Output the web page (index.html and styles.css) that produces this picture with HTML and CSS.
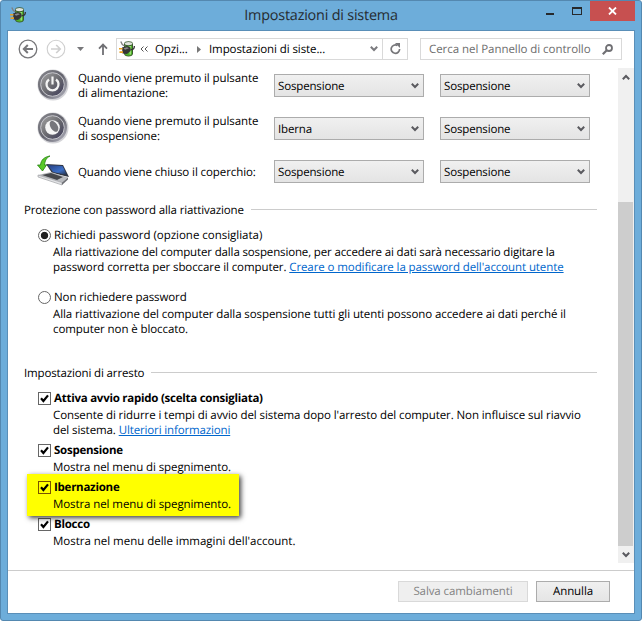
FILE: index.html
```html
<!DOCTYPE html>
<html lang="it">
<head>
<meta charset="utf-8">
<title>Impostazioni di sistema</title>
<link rel="stylesheet" href="styles.css">
</head>
<body>
<svg class="defs" width="0" height="0">
  <defs>
    <linearGradient id="ring" x1="0" y1="0" x2="1" y2="1"><stop offset="0" stop-color="#8b8b90"/><stop offset=".5" stop-color="#62626c"/><stop offset="1" stop-color="#b8b8c4"/></linearGradient>
    <linearGradient id="disc" x1="0" y1="0" x2="1" y2="1"><stop offset="0" stop-color="#a5a5a5"/><stop offset=".5" stop-color="#6b6b70"/><stop offset="1" stop-color="#3a3858"/></linearGradient>
    <linearGradient id="screen" x1="0" y1="0" x2="1" y2="1"><stop offset="0" stop-color="#253c7c"/><stop offset=".6" stop-color="#3c70c8"/><stop offset="1" stop-color="#222c40"/></linearGradient>
    <symbol id="plug" viewBox="0 0 16 16">
      <path d="M5 3C5 1 7 .3 9.500.3S14 1 14 3v9.500c0 2-2 3-4.500 3S5 14.500 5 12.500z" fill="#3c5a30"/>
      <path d="M6 4.500c2 1 5 1 7 0v8c0 1.500-1.500 2.200-3.500 2.200S6 14 6 12.500z" fill="#4fb32a"/>
      <path d="M10.500 5h1.500v8.500h-1.500z" fill="#9ade74"/>
      <ellipse cx="9.500" cy="2.600" rx="3.800" ry="1.600" fill="#dfe4dc"/>
      <path d="M1.800.5C2.500 3 3 4 5.500 5" fill="none" stroke="#808080" stroke-width="1.3"/>
      <path d="M11.500 8.500c3 .3 4-1 3.800-3.500" fill="none" stroke="#333" stroke-width="1.300"/>
      <path d="m3 6.500 5-1.500 3.500 1.500v3.500l-3.500 3-4.500-.5z" fill="#353535"/>
      <path d="m4.500 7.300 3.500-1 2 .9-4 1.500z" fill="#8a8a8a"/>
      <path d="M0 7h3.500v1.600H0zM.5 10.300H4v1.600H.5z" fill="#e8a020"/>
    </symbol>
    <symbol id="chev" viewBox="0 0 8 6"><path d="M.8.8 4 4 7.2.8" fill="none" stroke="#5a5a5f" stroke-width="2"/></symbol>
    <symbol id="tick" viewBox="0 0 13 13"><path d="M3 6.2 5.4 9 10 3.4" fill="none" stroke="#000" stroke-width="2.2"/></symbol>
  </defs>
</svg>
<div class="window">
  <header class="titlebar">
    <svg class="app-icon" width="16" height="16"><use href="#plug"/></svg>
    <h1>Impostazioni di sistema</h1>
    <div class="controls">
      <span class="minimize"></span><span class="maximize"></span>
      <span class="close"><svg width="9" height="8" viewBox="0 0 9 8"><path d="m1 .5 7 7M8 .5l-7 7" stroke="#fff" stroke-width="1.8"/></svg></span>
    </div>
  </header>
  <div class="client">
    <nav class="toolbar">
      <svg class="back" width="20" height="20" viewBox="0 0 20 20" fill="none" stroke="#77777a"><circle cx="10" cy="10" r="8.8" stroke-width="1.3"/><path d="M15 10H6.3M9.8 6 5.8 10l4 4" stroke-width="2"/></svg>
      <svg class="forward" width="20" height="20" viewBox="0 0 20 20" fill="none" stroke="#cfcfcf"><circle cx="10" cy="10" r="8.8" stroke-width="1.1"/><path d="M5 10h8.7M10.2 6l4 4-4 4" stroke-width="1.7"/></svg>
      <svg class="recent" width="7" height="4"><path d="M0 0h7L3.5 4z" fill="#77777a"/></svg>
      <svg class="up" width="10" height="12" viewBox="0 0 10 12"><path d="M5 12V1.5M1 5.6l4-4 4 4" fill="none" stroke="#707074" stroke-width="1.8"/></svg>
      <div class="address">
        <svg class="crumb-icon" width="16" height="16"><use href="#plug"/></svg>
        <svg class="more" width="8" height="6" viewBox="0 0 8 6"><path d="M3.5.5 1 3l2.5 2.5M7.5.5 5 3l2.5 2.5" fill="none" stroke="#555"/></svg>
        <span class="crumb first">Opzi...</span>
        <svg class="sep" width="4" height="7"><path d="M0 0 4 3.5 0 7z" fill="#777"/></svg>
        <span class="crumb">Impostazioni di siste...</span>
        <svg class="drop" width="8" height="6"><use href="#chev"/></svg>
        <span class="refresh"><svg width="11" height="12" viewBox="0 0 11 12"><path d="M7.4 2.4A4.2 4.2 0 1 0 9.6 6" fill="none" stroke="#77777a" stroke-width="1.7"/><path d="M5 0h5v5z" fill="#77777a"/></svg></span>
      </div>
      <div class="search"><span>Cerca nel Pannello di controllo</span>
        <svg width="11" height="11" viewBox="0 0 11 11" fill="none" stroke="#707074"><circle cx="7" cy="4" r="3" stroke-width="1.8"/><path d="M4.8 6.2.8 10.2" stroke-width="2.2"/></svg>
      </div>
    </nav>
    <div class="body">
      <main>
        <div class="row">
          <svg width="32" height="32" viewBox="0 0 32 32"><circle cx="16" cy="16" r="15.5" fill="#d4d4d8"/><circle cx="15.5" cy="15.5" r="14.5" fill="url(#ring)"/><circle cx="15.5" cy="15.5" r="11.8" fill="url(#disc)" stroke="#c6c6cc"/><path d="M12 10.5a6 6 0 1 0 7 0" fill="none" stroke="#f4f4f4" stroke-width="2.3"/><path d="M15.5 7.5v8" stroke="#f4f4f4" stroke-width="2.2"/></svg>
          <p><span>Quando viene premuto il pulsante</span><br><span>di alimentazione:</span></p>
          <div class="select"><span>Sospensione</span><svg width="8" height="6"><use href="#chev"/></svg></div>
          <div class="select"><span>Sospensione</span><svg width="8" height="6"><use href="#chev"/></svg></div>
        </div>
        <div class="row">
          <svg width="32" height="32" viewBox="0 0 32 32"><circle cx="16" cy="16" r="15.5" fill="#d4d4d8"/><circle cx="15.5" cy="15.5" r="14.5" fill="url(#ring)"/><circle cx="15.5" cy="15.5" r="11.8" fill="url(#disc)" stroke="#c6c6cc"/><circle cx="15.5" cy="15.5" r="7.3" fill="#f5f5f5"/><ellipse cx="17" cy="14.300" rx="3.500" ry="6" transform="rotate(-32 17 14.300)" fill="#77777c"/></svg>
          <p><span>Quando viene premuto il pulsante</span><br><span>di sospensione:</span></p>
          <div class="select"><span>Iberna</span><svg width="8" height="6"><use href="#chev"/></svg></div>
          <div class="select"><span>Sospensione</span><svg width="8" height="6"><use href="#chev"/></svg></div>
        </div>
        <div class="row">
          <svg width="32" height="32" viewBox="0 0 32 32"><path d="m9 9 17 1 6 12-17-4z" fill="#303541"/><path d="m10.500 10 15 1 4.500 9-14-3z" fill="url(#screen)"/><path d="m1 20 13-3 17 5.500-6 5z" fill="#b9bbbf"/><path d="m5 20 9-2 12 4-6 3z" fill="#46484c"/><path d="m1 20 24 7.500V30L1 22z" fill="#e2e3e6" stroke="#85878b" stroke-width=".5"/><path d="m25 27.500 6-5v2l-6 5.500z" fill="#6d6f74"/><path d="M13 1C7 2 4 5 3.500 10H.5l5 6 4-6H7.500C8 6 9 3 13 1z" fill="#58c829" stroke="#23820d" stroke-width=".8"/></svg>
          <p><span>Quando viene chiuso il coperchio:</span></p>
          <div class="select"><span>Sospensione</span><svg width="8" height="6"><use href="#chev"/></svg></div>
          <div class="select"><span>Sospensione</span><svg width="8" height="6"><use href="#chev"/></svg></div>
        </div>

        <h2 class="password">Protezione con password alla riattivazione</h2>
        <div class="option wide">
          <div class="label"><span class="radio on"></span><span class="loose">Richiedi password (opzione consigliata)</span></div>
          <p><span class="snug">Alla riattivazione del computer dalla sospensione, per accedere ai dati sarà necessario digitare la</span><br><span>password corretta per sboccare il computer. </span><a>Creare o modificare la password dell'account utente</a></p>
        </div>
        <div class="option wide">
          <div class="label"><span class="radio"></span><span>Non richiedere password</span></div>
          <p><span>Alla riattivazione del computer dalla sospensione tutti gli utenti possono accedere ai dati perché il</span><br><span>computer non è bloccato.</span></p>
        </div>

        <h2 class="shutdown">Impostazioni di arresto</h2>
        <div class="option">
          <div class="label bold"><span class="check"><svg width="13" height="13"><use href="#tick"/></svg></span><span>Attiva avvio rapido (scelta consigliata)</span></div>
          <p><span>Consente di ridurre i tempi di avvio del sistema dopo l'arresto del computer. Non influisce sul riavvio</span><br><span>del sistema. </span><a class="snug">Ulteriori informazioni</a></p>
        </div>
        <div class="option">
          <div class="label bold"><span class="check"><svg width="13" height="13"><use href="#tick"/></svg></span><span>Sospensione</span></div>
          <p><span>Mostra nel menu di spegnimento.</span></p>
        </div>
        <div class="option highlight">
          <div class="label bold"><span class="check"><svg width="13" height="13"><use href="#tick"/></svg></span><span>Ibernazione</span></div>
          <p><span>Mostra nel menu di spegnimento.</span></p>
        </div>
        <div class="option">
          <div class="label bold"><span class="check"><svg width="13" height="13"><use href="#tick"/></svg></span><span>Blocco</span></div>
          <p><span class="loose">Mostra nel menu delle immagini dell'account.</span></p>
        </div>
      </main>
      <div class="scrollbar">
        <svg class="flip" width="8" height="6"><use href="#chev"/></svg>
        <div class="thumb"></div>
        <svg width="8" height="6"><use href="#chev"/></svg>
      </div>
    </div>
    <footer>
      <div class="button disabled">Salva cambiamenti</div>
      <div class="button">Annulla</div>
    </footer>
  </div>
</div>
</body>
</html>
```
FILE: styles.css
```css
* { box-sizing: border-box; }
body {
  margin: 0;
  width: 642px;
  height: 621px;
  overflow: hidden;
  background: #fff;
  font: 11.5px/15px "Open Sans", "Noto Sans", sans-serif;
  letter-spacing: -0.09px;
  text-rendering: geometricPrecision;
  color: #000;
}
h1, h2, p { margin: 0; font: inherit; }
svg { display: block; flex: none; }
span, a { white-space: pre; }
.defs { position: absolute; }
.snug { letter-spacing: -0.14px; }
.loose { letter-spacing: -0.02px; }

.window {
  display: flex;
  flex-direction: column;
  height: 621px;
  padding: 0 6px 6px;
  background: #6dadda;
  border: 1px solid #5488b0;
  border-radius: 3px;
}
.titlebar { display: flex; height: 29px; }
.app-icon { margin: 6px 0 0 3px; }
h1 { flex: 1; padding-left: 94px; text-align: center; font-size: 14.4px; letter-spacing: -0.2px; line-height: 30px; color: #252b30; }
.controls { display: flex; width: 113px; }
.minimize { width: 8px; height: 2px; margin: 12px 0 0 24px; background: #26292c; }
.maximize { width: 10px; height: 8px; margin: 6px 0 0 18px; border: 1px solid #26292c; border-top-width: 2px; }
.close { display: flex; align-items: center; justify-content: center; width: 45px; height: 20px; margin-left: auto; background: #c75050; }

.client { flex: 1; display: flex; flex-direction: column; border: 1px solid #5a8fb8; background: #fff; min-height: 0; }
.toolbar { display: flex; height: 33px; padding: 7px 12px 0 10px; }
.back { margin-top: 1px; }
.forward { margin: 1px 0 0 8px; }
.recent { margin: 9px 0 0 11px; }
.up { margin: 5px 0 0 14px; }
.address, .search { display: flex; align-items: center; height: 22px; border: 1px solid #d9d9d9; }
.address { width: 292px; margin-left: 8px; }
.crumb-icon { margin-left: 2px; }
.more { margin-left: 5px; }
.crumb { margin-left: 8px; }
.crumb.first { width: 34px; margin-left: 7px; }
.sep { margin-left: 8px; }
.drop { margin-left: auto; opacity: .8; }
.refresh { display: flex; align-items: center; justify-content: center; width: 25px; height: 20px; margin-left: 4px; border-left: 1px solid #d9d9d9; }
.search { width: 202px; margin-left: 12px; padding: 0 8px; justify-content: space-between; letter-spacing: -0.05px; color: #6d6d6d; }

.body { flex: 1; display: flex; min-height: 0; }
main { width: 610px; padding: 0 21px 0 16px; }
.row { display: flex; align-items: center; height: 43px; padding-left: 13px; }
.row > svg { margin-top: -2px; }
.row p { flex: none; width: 205px; padding: 1px 0 0 9px; }
.select { flex: none; display: flex; align-items: center; justify-content: space-between; width: 150px; height: 23px; padding: 0 4px 0 3px; border: 1px solid #acacac; background: linear-gradient(#f0f0f0, #e4e4e4); letter-spacing: -0.15px; }
.select span { padding-top: 1px; }
.row .select + .select { margin-left: 16px; }

h2 { display: flex; height: 15px; }
main h2 { letter-spacing: -0.14px; }
h2::after { content: ""; flex: 1; height: 1px; margin: 6px 0 0 7px; background: #ccc; }
.password { margin: 10px 0; }
.shutdown { margin: 29px 0 10px; }
.option { margin: 0 0 5px 14px; }
.option.wide + .wide { margin-top: 15px; }
.label { display: flex; height: 15px; margin-bottom: 2px; }
.bold { font-weight: 700; letter-spacing: -0.25px; }
.radio, .check { flex: none; width: 13px; height: 13px; margin: 1px 3px 0 0; border: 1px solid #666; background: #fff; }
.radio { border-radius: 50%; }
.radio.on { background: radial-gradient(circle, #222 3.3px, #fff 4.1px); }
.check svg { margin: -1px; }
.option p { padding-left: 15px; }
a { color: #0066cc; text-decoration: underline; }
.highlight {
  position: relative;
  z-index: 1;
  width: 212px;
  margin: -6px 0 1px 3px;
  padding: 6px 0 4px 11px;
  background: #ff0;
  box-shadow: 2px 2px 5px rgba(0, 0, 0, .75);
}
.highlight .check { background: none; border-color: #7a5200; }

.scrollbar { display: flex; flex-direction: column; align-items: center; width: 16px; height: 495px; margin-top: 4px; background: #f0f0f0; }
.scrollbar svg { margin-top: 6px; }
.scrollbar .flip { transform: scaleY(-1); }
.thumb { width: 15px; height: 344px; margin: 122px 1px 0 0; background: #cdcdcd; }

footer { display: flex; justify-content: flex-end; gap: 8px; height: 43px; padding: 10px 24px 0 0; border-top: 1px solid #ccc; }
.button { width: 74px; height: 21px; border: 1px solid #acacac; background: linear-gradient(#f0f0f0, #e5e5e5); text-align: center; line-height: 20px; }
.button.disabled { width: 130px; border-color: #d9d9d9; background: #efefef; color: #838383; }
```
